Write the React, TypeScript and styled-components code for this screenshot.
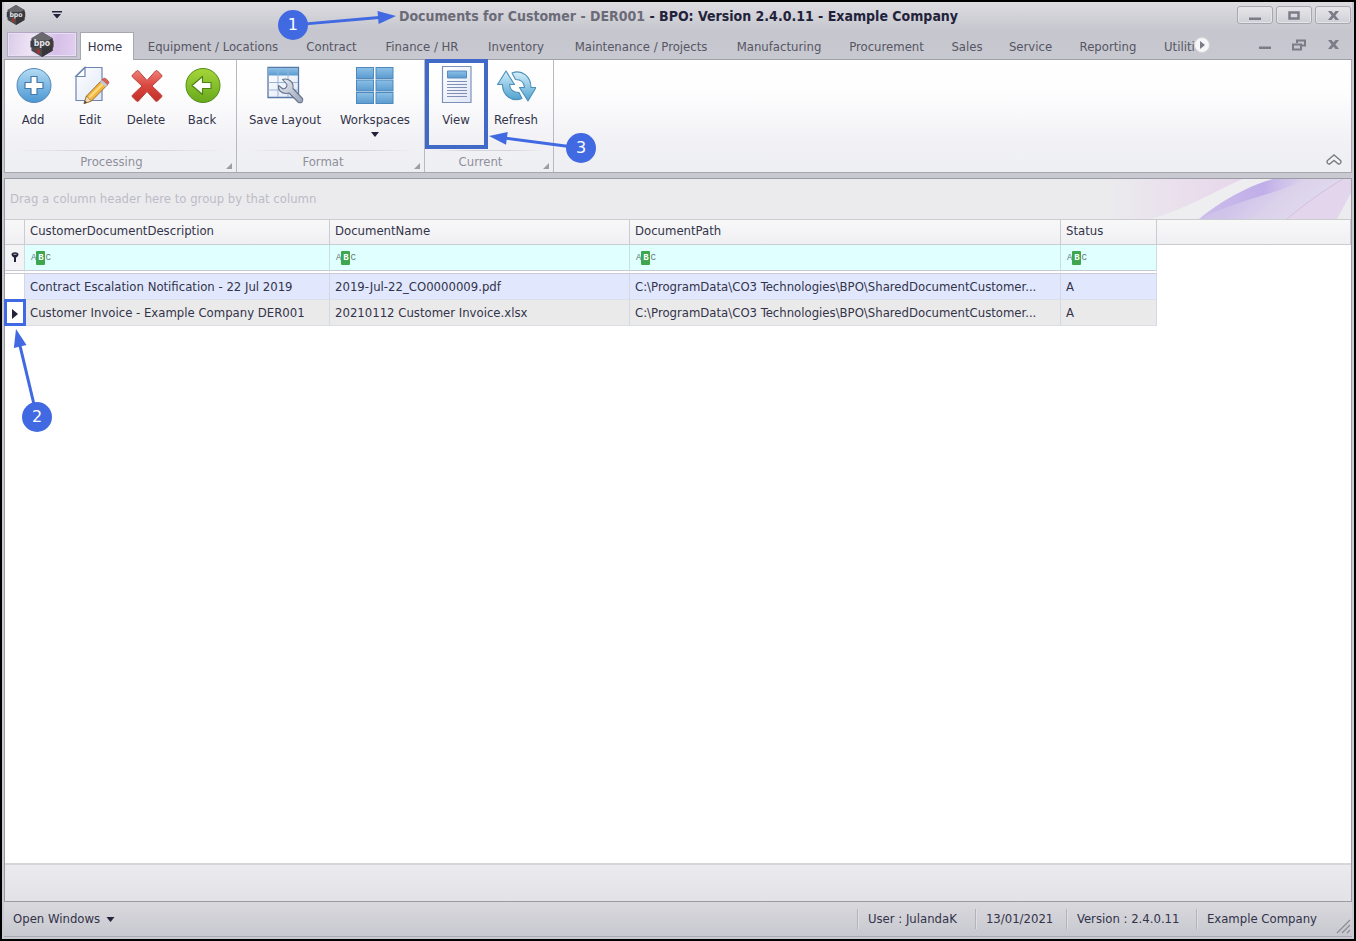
import React from "react";
import styled, { createGlobalStyle, css } from "styled-components";

const GlobalStyle = createGlobalStyle`
  *, *::before, *::after { box-sizing: border-box; }
  body {
    margin: 0;
    background: #000;
    font-family: "DejaVu Sans Condensed", "DejaVu Sans", sans-serif;
    font-size: 13px;
    line-height: 16px;
    color: #33334a;
  }
  button, input {
    margin: 0;
    padding: 0;
    border: 0;
    background: none;
    font: inherit;
    color: inherit;
  }
`;

const BLUE = "#4169e1";

const Frame = styled.div`
  min-height: 100vh;
  padding: 2px;
  display: flex;
  background: #000;
`;

const Window = styled.div`
  flex: 1;
  min-width: 0;
  display: flex;
  flex-direction: column;
  padding: 0 2px 2px;
  background: #c9c9d1;
`;

const Chrome = styled.header`
  background: linear-gradient(#dcdce1, #c6c6ce 50%, #c8c8d0);
`;

const TitleBar = styled.div`
  height: 30px;
  display: grid;
  grid-template-columns: 1fr auto 1fr;
  align-items: center;
  padding: 0 1px 4px 2px;
`;

const QuickAccess = styled.div`
  display: flex;
  align-items: center;
  gap: 26px;
`;

const IconButton = styled.button`
  display: flex;
  align-items: center;
  justify-content: center;
`;

const Title = styled.h1`
  position: relative;
  z-index: 2;
  margin: 0;
  padding-top: 2px;
  font-size: 14px;
  font-weight: 700;
  line-height: 18px;
  white-space: nowrap;
  color: #22223a;
`;

const TitleMuted = styled.span`
  color: #6b6b78;
`;

const WindowButtons = styled.div`
  display: flex;
  justify-content: flex-end;
  gap: 3px;
`;

const WindowButton = styled(IconButton)`
  width: 36px;
  height: 18px;
  border: 1px solid #a7a7b0;
  border-radius: 3px;
  background: linear-gradient(#e6e6ea, #cfcfd6);
  box-shadow: inset 0 0 0 1px #e4e4e9;
`;

const TabBar = styled.div`
  height: 28px;
  display: flex;
  align-items: stretch;
  border-bottom: 1px solid #a0a0aa;
  padding-left: 3px;
`;

const AppButton = styled(IconButton)`
  width: 70px;
  height: 25px;
  margin-right: 3px;
  border: 1px solid #b3a9c4;
  box-shadow: inset 0 0 0 1px #e9dff2;
  background: linear-gradient(100deg, #d9cbe9, #efe4f5 35%, #d6bfe8 70%, #e3d0ef);
`;

const TabArea = styled.div`
  position: relative;
  flex: 1;
  min-width: 0;
`;

const Tabs = styled.nav`
  display: flex;
  height: 28px;
  overflow: hidden;
`;

const Tab = styled.button<{ $width: number; $active?: boolean }>`
  flex: none;
  min-width: ${(p) => p.$width}px;
  padding-top: 2px;
  white-space: nowrap;
  color: #565664;
  ${(p) =>
    p.$active &&
    css`
      padding: 1px 4px 0 0;
      color: #33334a;
      background: #fff;
      border: 1px solid #a7a7b0;
      border-bottom: 0;
    `}
`;

const TabScroll = styled(IconButton)`
  position: absolute;
  right: 0;
  top: 5px;
  width: 16px;
  height: 16px;
  border-radius: 8px;
  background: #f6f6f8;
  border: 1px solid #d5d5da;
`;

const MdiButtons = styled.div`
  display: flex;
  align-items: center;
  gap: 21px;
  padding: 0 12px 2px 49px;
`;

const Ribbon = styled.section`
  display: flex;
  min-height: 113px;
  border: solid #a7a7b0;
  border-width: 0 1px 1px;
  background: linear-gradient(#fff, #fdfdfe 30%, #f1f1f5 75%, #eeeff3);
`;

const Group = styled.div<{ $width: number; $start?: number }>`
  width: ${(p) => p.$width}px;
  display: flex;
  flex-direction: column;
  padding-left: ${(p) => p.$start ?? 0}px;
  border-right: 1px solid #b9b9c2;
`;

const GroupButtons = styled.div`
  display: flex;
  flex: 1;
`;

const Caption = styled.div`
  position: relative;
  height: 22px;
  padding: 3px 18px 0 0;
  text-align: center;
  color: #8f8f9b;
  border-top: 1px solid;
  border-image: linear-gradient(90deg, transparent 5%, #d4d4da 35%, #d4d4da 65%, transparent 95%) 1;
`;

const Launcher = styled(IconButton)`
  position: absolute;
  right: 4px;
  bottom: 3px;
`;

const ToolButton = styled.button<{ $width: number }>`
  position: relative;
  width: ${(p) => p.$width}px;
  display: flex;
  flex-direction: column;
  align-items: center;
  gap: 4px;
  padding-top: 6px;
  white-space: nowrap;

  svg.tool {
    width: 40px;
    height: 40px;
    margin-bottom: 2px;
  }
`;

const RibbonEnd = styled.div`
  flex: 1;
  display: flex;
  justify-content: flex-end;
  align-items: flex-end;
  padding: 0 9px 6px 0;
`;

const Main = styled.main`
  flex: 1;
  display: flex;
  flex-direction: column;
  margin-top: 5px;
  border: 1px solid #9b9ba6;
  background: #fff;
`;

const GroupPanel = styled.div`
  display: flex;
  justify-content: space-between;
  align-items: center;
  height: 40px;
  padding-left: 5px;
  background: #ebebee;
  color: #bcbcc6;
`;

const Grid = styled.table`
  width: 100%;
  table-layout: fixed;
  border-collapse: separate;
  border-spacing: 0;
`;

const HeadCell = styled.th`
  height: 26px;
  padding: 0 5px 2px;
  text-align: left;
  font-weight: 400;
  border: solid #cbcbd2;
  border-width: 1px 1px 1px 0;
  background: linear-gradient(#f8f8f9, #f0f0f3);
`;

const FilterCell = styled.td<{ $kind?: "indicator" | "rest" }>`
  height: 29px;
  padding: 0 6px;
  ${(p) =>
    p.$kind !== "rest" &&
    css`
      border-right: 1px solid #cddde2;
      border-bottom: 4px double #c9c9d3;
      background: ${p.$kind ? "#f4f4f6" : "#e0ffff"};
      background-clip: padding-box;
    `}
`;

const FilterField = styled.label`
  display: flex;
  align-items: center;
  gap: 4px;

  input {
    flex: 1;
    min-width: 0;
    outline: none;
  }
`;

const FilterGlyph = styled.span`
  display: flex;
  align-items: center;
  font-family: "Liberation Mono", monospace;
  font-size: 9px;
  line-height: 14px;
  color: #5f7878;

  b {
    width: 9px;
    text-align: center;
    color: #fff;
    background: #3fa650;
    border-radius: 1px;
  }
`;

const Cell = styled.td<{ $tone?: "blue" | "grey" }>`
  height: 26px;
  padding: 1px 5px 0;
  overflow: hidden;
  text-overflow: ellipsis;
  white-space: nowrap;
  ${(p) =>
    p.$tone &&
    css`
      background: ${p.$tone === "blue" ? "#e1e8fd" : "#eaeaea"};
      border-right: 1px solid #d4d8e4;
      border-bottom: 1px solid #dcdfe6;
    `}
`;

const Indicator = styled.td`
  position: relative;
  padding: 0;
  border-right: 1px solid #d6d6dc;
  text-align: center;

  > svg {
    vertical-align: middle;
  }
`;

const GridFooter = styled.footer`
  height: 38px;
  margin-top: auto;
  border-top: 2px solid #d6d6da;
  background: linear-gradient(#ebebee, #e2e2e7);
`;

const StatusBar = styled.footer`
  display: flex;
  align-items: center;
  height: 35px;
  padding-left: 9px;
  border-bottom: 1px solid #a9a9b3;
  background: linear-gradient(#d9d9dd, #c8c8d0);
`;

const OpenWindows = styled.button`
  display: flex;
  align-items: center;
  gap: 6px;
  margin-right: auto;
`;

const StatusItem = styled.span<{ $width: number }>`
  min-width: ${(p) => p.$width}px;
  padding: 2px 10px;
  border-left: 1px solid #b3b3bc;
  box-shadow: inset 1px 0 #dedee3;
`;

const Grip = styled.svg`
  align-self: flex-end;
  margin: 0 1px 2px 9px;
`;

const Highlight = styled.span<{ $edge: number }>`
  position: absolute;
  z-index: 1;
  inset: ${(p) => (p.$edge > 3 ? "-1px -2px 1px -1px" : "-1px -2px 0 -1px")};
  border: ${(p) => p.$edge}px solid ${(p) => (p.$edge > 3 ? "#4169c8" : BLUE)};
  pointer-events: none;
`;

const CalloutBox = styled.span<{ $left: number; $top: number }>`
  position: absolute;
  z-index: 3;
  left: ${(p) => p.$left}px;
  top: ${(p) => p.$top}px;
  pointer-events: none;

  svg {
    display: block;
    overflow: visible;
  }
`;

const Badge = styled.span<{ $x: number; $y: number }>`
  position: absolute;
  left: ${(p) => p.$x}px;
  top: ${(p) => p.$y}px;
  width: 30px;
  height: 30px;
  border-radius: 15px;
  background: ${BLUE};
  color: #fff;
  font-family: "DejaVu Sans", sans-serif;
  font-size: 16px;
  font-weight: 400;
  line-height: 30px;
  text-align: center;
`;

type Point = [number, number];

/* A numbered badge centred on `from`, with an arrow whose tip is at `to`. */
function Callout({ n, left, top, from, to }: { n: number; left: number; top: number; from: Point; to: Point }) {
  const dx = to[0] - from[0];
  const dy = to[1] - from[1];
  const len = Math.hypot(dx, dy);
  const angle = (Math.atan2(dy, dx) * 180) / Math.PI;
  return (
    <CalloutBox $left={left} $top={top}>
      <svg width="1" height="1" aria-hidden="true">
        <g transform={`translate(${from[0]} ${from[1]}) rotate(${angle})`} fill={BLUE}>
          <rect x="10" y="-1.5" width={len - 24} height="3" />
          <path d={`M${len} 0 l-18 -6.5 v13z`} />
        </g>
      </svg>
      <Badge $x={from[0] - 15} $y={from[1] - 15}>{n}</Badge>
    </CalloutBox>
  );
}

function Hexagon({ width, height }: { width: number; height: number }) {
  return (
    <svg width={width} height={height} viewBox="0 0 24 26" aria-hidden="true">
      <path d="M12 0 23 6.5v13L12 26 1 19.5v-13z" fill="#4b4b4f" />
      <path d="M12 0 23 6.5 12 13 1 6.5z" fill="#6a6a6e" />
      <path d="M12 13v13l11-6.5v-13z" fill="#37373b" />
      <path d="M0 9h24v7H0z" fill="#3c3c40" />
      <path d="M7 17l3.500 2-1 4-3-2z" fill="#a3332e" />
      <text x="12" y="15" textAnchor="middle" fontSize="9" fontWeight="700" fill="#e4e4e8">bpo</text>
    </svg>
  );
}

const CloseGlyph = () => (
  <svg width="13" height="11" viewBox="0 0 13 11" aria-hidden="true">
    <path d="M1 1h3.500l2 2.500L8.500 1H12L8.400 5.500 12 10H8.500l-2-2.500-2 2.500H1l3.600-4.500z" fill="#7c7c88" />
  </svg>
);

const MinGlyph = () => (
  <svg width="12" height="11" viewBox="0 0 12 11" aria-hidden="true">
    <path d="M0 7.500h12v2.500H0z" fill="#7c7c88" />
  </svg>
);

const MaxGlyph = () => (
  <svg width="12" height="9" viewBox="0 0 12 9" aria-hidden="true">
    <path d="M1.500 1.500h9v6h-9z" fill="none" stroke="#7c7c88" strokeWidth="2.500" />
  </svg>
);

const RestoreGlyph = () => (
  <svg width="14" height="12" viewBox="0 0 14 12" aria-hidden="true">
    <path d="M5 4V1.500h8V6.500h-3M1 5.500h8v5H1z" fill="none" stroke="#7c7c88" strokeWidth="2" />
  </svg>
);

const Defs = () => (
  <svg width="0" height="0" display="block" aria-hidden="true">
    <defs>
      <linearGradient id="blue" x2="0" y2="1"><stop stopColor="#b5dcf3" /><stop offset="1" stopColor="#4a97d3" /></linearGradient>
      <linearGradient id="green" x2="0" y2="1"><stop stopColor="#a6d63a" /><stop offset="1" stopColor="#67a91c" /></linearGradient>
      <linearGradient id="red" x2="0" y2="1"><stop stopColor="#ee8078" /><stop offset=".5" stopColor="#d9463e" /><stop offset="1" stopColor="#c12f28" /></linearGradient>
      <linearGradient id="paper" x2="1" y2="1"><stop stopColor="#fff" /><stop offset="1" stopColor="#dfe6f5" /></linearGradient>
      <linearGradient id="tile" x2="0" y2="1"><stop stopColor="#8cc0e6" /><stop offset="1" stopColor="#5b9bd0" /></linearGradient>
      <linearGradient id="steel" x2="1" y2="1"><stop stopColor="#eef1f7" /><stop offset="1" stopColor="#98a3b8" /></linearGradient>
      <linearGradient id="aqua" x2="0" y2="1"><stop stopColor="#d3eefa" /><stop offset="1" stopColor="#4fa3cf" /></linearGradient>
    </defs>
  </svg>
);

const AddIcon = () => (
  <svg className="tool" viewBox="0 0 40 40" aria-hidden="true">
    <circle cx="21" cy="19.500" r="17" fill="url(#blue)" stroke="#5686b8" />
    <path d="M18 10.500h6v6h6v6h-6v6h-6v-6h-6v-6h6z" fill="#fff" stroke="#4478ad" strokeWidth="1.200" strokeLinejoin="round" />
  </svg>
);

const EditIcon = () => (
  <svg className="tool" viewBox="0 0 40 40" aria-hidden="true">
    <path d="M14.500 1.500h17.500v33h-26V10z" fill="url(#paper)" stroke="#6c85b5" strokeWidth="1.200" />
    <path d="M15 1.500 6 10.500h9z" fill="#fff" stroke="#6c85b5" strokeWidth="1.200" />
    <path d="M14 37.500l2.500-7.500L32 14l5.500 4.800L21.500 35z" fill="#f4b63f" stroke="#8b6428" strokeWidth=".9" />
    <path d="M18.800 32 34.500 16.300" stroke="#fbdc84" strokeWidth="2" />
    <path d="M32 14l1.600-1.700c1.200-1 6 3 5.200 4.600l-1.500 1.800z" fill="#dd6157" stroke="#a84a43" strokeWidth=".8" />
    <path d="M30 16l2-2 5.300 4.800-2 2z" fill="#c3cad8" />
    <path d="M14 37.500l2.500-7.500 5 5z" fill="#f5dcb0" stroke="#8b6428" strokeWidth=".7" />
    <path d="M14 37.500l1-3 2 2z" fill="#444" />
  </svg>
);

const DeleteIcon = () => (
  <svg className="tool" viewBox="0 0 40 40" aria-hidden="true">
    <path d="M10.500 5Q11.500 4 12.500 5L21 14.500 29.500 5Q30.500 4 31.500 5L35.500 9Q36.500 10 35.500 11L26 20 35.500 29Q36.500 30 35.500 31L31.500 35Q30.500 36 29.500 35L21 25.500 12.500 35Q11.500 36 10.500 35L6.500 31Q5.500 30 6.500 29L16 20 6.500 11Q5.500 10 6.500 9z" fill="url(#red)" stroke="#b9423c" />
  </svg>
);

const BackIcon = () => (
  <svg className="tool" viewBox="0 0 40 40" aria-hidden="true">
    <circle cx="21" cy="19.500" r="17" fill="url(#green)" stroke="#4f8c17" />
    <path d="M10 19.500 20.500 10.500v6H29v6h-8.500v6z" fill="#fff" stroke="#4d8416" strokeWidth="1.200" strokeLinejoin="round" />
  </svg>
);

const SaveLayoutIcon = () => (
  <svg className="tool" viewBox="0 0 40 40" aria-hidden="true">
    <path d="M3 1.500h30.500v30H3z" fill="url(#paper)" stroke="#5878a8" strokeWidth="1.300" />
    <path d="M3.500 2h29.500v7.500H3.500z" fill="url(#tile)" />
    <path d="M13 2v29M23 2v29M3 16.500h30M3 24h30" stroke="#9cb3d8" />
    <path d="M17.500 13.500Q20 12.500 23 13.500Q29 16 28 22.500L37.500 32.500Q38.500 34.500 37 36Q35 37.500 33 36L24 27Q19 28.500 15 25Q13 22.500 13.500 19.500L18 23Q22 22.500 22 18.500z" fill="url(#steel)" stroke="#66738c" strokeWidth="1.100" strokeLinejoin="round" />
  </svg>
);

const WorkspacesIcon = () => (
  <svg className="tool" viewBox="0 0 40 40" aria-hidden="true">
    {[1.5, 14, 26.5].map((y) =>
      [1.5, 21].map((x) => (
        <rect key={`${x}-${y}`} x={x} y={y} width="17" height="11" fill="url(#tile)" stroke="#4e88bd" />
      )),
    )}
  </svg>
);

const ViewIcon = () => (
  <svg className="tool" viewBox="0 0 40 40" aria-hidden="true">
    <path d="M6.500 .5h28.500v36H6.500z" fill="url(#paper)" stroke="#7c92bd" strokeWidth="1.200" />
    <path d="M11.500 5h19v7h-19z" fill="url(#tile)" stroke="#5a8cc0" />
    <path d="M11 15.500h20M11 18.500h20M11 21.500h20M11 24.500h20M11 27.500h20M11 30.500h20" stroke="#7f90b4" strokeWidth="1.200" />
  </svg>
);

const RefreshIcon = () => (
  <svg className="tool" viewBox="0 0 40 40" aria-hidden="true">
    <g fill="url(#aqua)" stroke="#4c8fb8" strokeWidth="1.100" strokeLinejoin="round">
      <path d="M1.500 18.500 10 5l8.500 13.500h-5c.5 5.500 4 8 9.500 8l3 6C15.500 36.500 6.500 29.500 6.500 18.500z" />
      <path d="M40 21.500 32 35 23.500 21.500h5c-.5-6-4-8-9-8l-3.500-6.500C26 3 35 10.500 35 21.500z" />
    </g>
  </svg>
);

const DownArrow = ({ size = 8 }: { size?: number }) => (
  <svg width={size} height="5" viewBox="0 0 8 5" aria-hidden="true">
    <path d="M0 0h8L4 5z" fill="#22223a" />
  </svg>
);

const PanelArt = () => (
  <svg width="260" height="40" viewBox="0 0 260 40" aria-hidden="true">
    <defs>
      <linearGradient id="pink"><stop offset=".1" stopColor="#e8d4ea" stopOpacity="0" /><stop offset=".6" stopColor="#e8d4ea" stopOpacity=".5" /><stop offset="1" stopColor="#e6d6ea" /></linearGradient>
      <linearGradient id="violet" x2="1" y2=".3"><stop stopColor="#c9bbec" /><stop offset=".4" stopColor="#d0c4ea" /><stop offset=".65" stopColor="#dcd3eb" /><stop offset="1" stopColor="#e2dbec" /></linearGradient>
      <linearGradient id="fold" x2="1" y2="0"><stop stopColor="#c4b3ea" stopOpacity=".4" /><stop offset=".6" stopColor="#bba8e8" stopOpacity=".8" /><stop offset="1" stopColor="#c9bbec" stopOpacity="0" /></linearGradient>
    </defs>
    <path d="M0 0H152C120 14 100 28 60 40H0z" fill="url(#pink)" />
    <path d="M152 0H190C160 10 130 25 108 40H60C100 28 120 14 152 0z" fill="#eeeef1" />
    <path d="M108 40C130 22 155 8 182 0H260V40z" fill="url(#violet)" />
    <path d="M108 40C130 22 155 8 182 0H215C190 14 150 20 108 40z" fill="url(#fold)" />
    <path d="M196 40C215 24 235 10 252 0H260V20L246 40z" fill="#e3d5eb" />
    <path d="M196 40C215 24 235 10 252 0" fill="none" stroke="#d2bfe2" />
    <path d="M246 40 260 14V40z" fill="#ececef" />
  </svg>
);

const tabs = [
  { name: "Home", width: 54 },
  { name: "Equipment / Locations", width: 158 },
  { name: "Contract", width: 79 },
  { name: "Finance / HR", width: 102 },
  { name: "Inventory", width: 86 },
  { name: "Maintenance / Projects", width: 164 },
  { name: "Manufacturing", width: 112 },
  { name: "Procurement", width: 103 },
  { name: "Sales", width: 58 },
  { name: "Service", width: 69 },
  { name: "Reporting", width: 86 },
  { name: "Utilities", width: 70 },
];

const columns = [
  { name: "CustomerDocumentDescription", width: 305 },
  { name: "DocumentName", width: 300 },
  { name: "DocumentPath", width: 431 },
  { name: "Status", width: 96 },
];

const path = "C:\\ProgramData\\CO3 Technologies\\BPO\\SharedDocumentCustomer...";
const rows = [
  ["Contract Escalation Notification - 22 Jul 2019", "2019-Jul-22_CO0000009.pdf", path, "A"],
  ["Customer Invoice - Example Company DER001", "20210112 Customer Invoice.xlsx", path, "A"],
];

function GroupCaption({ children }: { children: string }) {
  return (
    <Caption>
      {children}
      <Launcher aria-label={`${children} options`}>
        <svg width="6" height="6" viewBox="0 0 6 6"><path d="M6 0v6H0z" fill="#9d9da8" /></svg>
      </Launcher>
    </Caption>
  );
}

export default function App() {
  return (
    <Frame>
      <GlobalStyle />
      <Window>
        <Defs />
        <Chrome>
          <TitleBar>
            <QuickAccess>
              <Hexagon width={20} height={20} />
              <IconButton aria-label="Customise quick access">
                <svg width="10" height="8" viewBox="0 0 10 8"><path d="M0 0h10v1.500H0zM1 3h8L5 7.500z" fill="#22223a" /></svg>
              </IconButton>
            </QuickAccess>
            <Title>
              <TitleMuted>Documents for Customer - DER001</TitleMuted> - BPO: Version 2.4.0.11 - Example Company
              <Callout n={1} left={-106} top={11} from={[0, 9]} to={[103, 0]} />
            </Title>
            <WindowButtons>
              <WindowButton aria-label="Minimise"><MinGlyph /></WindowButton>
              <WindowButton aria-label="Maximise"><MaxGlyph /></WindowButton>
              <WindowButton aria-label="Close"><CloseGlyph /></WindowButton>
            </WindowButtons>
          </TitleBar>
          <TabBar>
            <AppButton aria-label="Application menu"><Hexagon width={24} height={25} /></AppButton>
            <TabArea>
              <Tabs>
                {tabs.map((t, i) => <Tab key={t.name} $width={t.width} $active={i === 0}>{t.name}</Tab>)}
              </Tabs>
              <TabScroll aria-label="Scroll tabs">
                <svg width="5" height="8" viewBox="0 0 5 8"><path d="M0 0v8l5-4z" fill="#7c7c88" /></svg>
              </TabScroll>
            </TabArea>
            <MdiButtons>
              <IconButton aria-label="Minimise document"><MinGlyph /></IconButton>
              <IconButton aria-label="Restore document"><RestoreGlyph /></IconButton>
              <IconButton aria-label="Close document"><CloseGlyph /></IconButton>
            </MdiButtons>
          </TabBar>
        </Chrome>

        <Ribbon>
          <Group $width={232}>
            <GroupButtons>
              <ToolButton $width={56}><AddIcon />Add</ToolButton>
              <ToolButton $width={58}><EditIcon />Edit</ToolButton>
              <ToolButton $width={54}><DeleteIcon />Delete</ToolButton>
              <ToolButton $width={58}><BackIcon />Back</ToolButton>
            </GroupButtons>
            <GroupCaption>Processing</GroupCaption>
          </Group>
          <Group $width={188} $start={3}>
            <GroupButtons>
              <ToolButton $width={90}><SaveLayoutIcon />Save Layout</ToolButton>
              <ToolButton $width={90}><WorkspacesIcon />Workspaces<DownArrow /></ToolButton>
            </GroupButtons>
            <GroupCaption>Format</GroupCaption>
          </Group>
          <Group $width={129} $start={1}>
            <GroupButtons>
              <ToolButton $width={60}>
                <ViewIcon />View
                <Highlight $edge={4} />
                <Callout n={3} left={63} top={76} from={[92, 12]} to={[0, 0]} />
              </ToolButton>
              <ToolButton $width={60}><RefreshIcon />Refresh</ToolButton>
            </GroupButtons>
            <GroupCaption>Current</GroupCaption>
          </Group>
          <RibbonEnd>
            <IconButton aria-label="Collapse ribbon">
              <svg width="16" height="12" viewBox="0 0 16 12">
                <path d="M1.500 6.500 8 1 14.500 6.500c1 1.500 0 4-2 3.500L8 6.500 3.500 10C1.500 10.500.5 8 1.500 6.500z" fill="#f4f4f6" stroke="#7c7c88" strokeWidth="1.400" />
              </svg>
            </IconButton>
          </RibbonEnd>
        </Ribbon>

        <Main>
          <GroupPanel>
            Drag a column header here to group by that column
            <PanelArt />
          </GroupPanel>
          <Grid>
            <colgroup>
              <col width={20} />
              {columns.map((c) => <col key={c.name} width={c.width} />)}
              <col />
            </colgroup>
            <thead>
              <tr>
                <HeadCell aria-label="Row indicator" />
                {columns.map((c) => <HeadCell key={c.name} scope="col">{c.name}</HeadCell>)}
                <HeadCell aria-hidden="true" />
              </tr>
            </thead>
            <tbody>
              <tr>
                <FilterCell $kind="indicator">
                  <svg width="8" height="10" viewBox="0 0 8 10" aria-hidden="true">
                    <path d="M.5 2.500C.5-.5 7.500-.5 7.500 2.500 7.500 4.500 5 5 5 6v4H3V6C3 5 .5 4.500.5 2.500z" fill="#22223a" />
                    <path d="M2.500 2.300h3" stroke="#b8b8c4" />
                  </svg>
                </FilterCell>
                {columns.map((c) => (
                  <FilterCell key={c.name}>
                    <FilterField>
                      <FilterGlyph aria-hidden="true">A<b>B</b>C</FilterGlyph>
                      <input type="text" aria-label={`Filter ${c.name}`} />
                    </FilterField>
                  </FilterCell>
                ))}
                <FilterCell $kind="rest" />
              </tr>
              {rows.map((row, r) => (
                <tr key={row[0]}>
                  <Indicator>
                    {r === 1 && (
                      <>
                        <svg width="6" height="10" viewBox="0 0 6 10" aria-hidden="true"><path d="M0 0v10l6-5z" fill="#22223a" /></svg>
                        <Highlight $edge={3} />
                        <Callout n={2} left={11} top={29} from={[21, 88]} to={[0, 0]} />
                      </>
                    )}
                  </Indicator>
                  {row.map((v, c) => <Cell key={c} $tone={r ? "grey" : "blue"}>{v}</Cell>)}
                  <Cell />
                </tr>
              ))}
            </tbody>
          </Grid>
          <GridFooter />
        </Main>

        <StatusBar>
          <OpenWindows>Open Windows <DownArrow size={9} /></OpenWindows>
          <StatusItem $width={118}>User : JulandaK</StatusItem>
          <StatusItem $width={91}>13/01/2021</StatusItem>
          <StatusItem $width={130}>Version : 2.4.0.11</StatusItem>
          <StatusItem $width={131}>Example Company</StatusItem>
          <Grip width="15" height="15" viewBox="0 0 15 15" aria-hidden="true">
            <path d="M1 14 14 1M6 14l8-8M11 14l3-3" stroke="#8d8d98" strokeWidth="1.300" />
          </Grip>
        </StatusBar>
      </Window>
    </Frame>
  );
}
